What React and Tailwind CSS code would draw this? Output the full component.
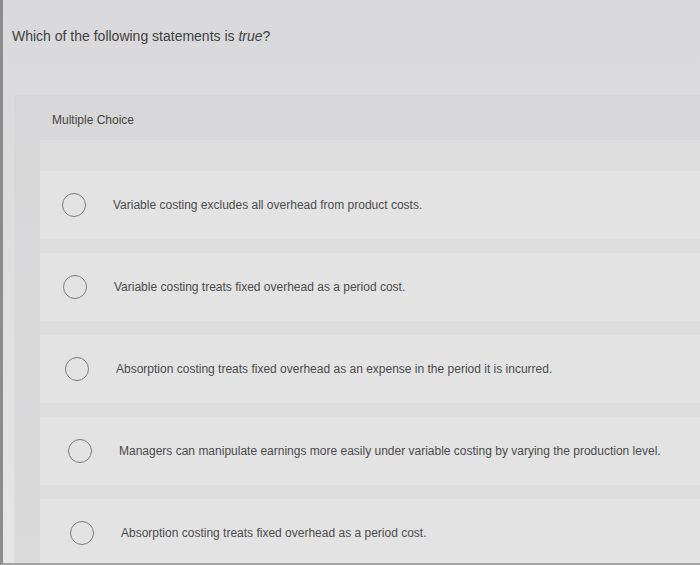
import React from 'react';

const options = [
  { text: 'Variable costing excludes all overhead from product costs.', indent: 'pl-[22px]' },
  { text: 'Variable costing treats fixed overhead as a period cost.', indent: 'pl-[23px]' },
  { text: 'Absorption costing treats fixed overhead as an expense in the period it is incurred.', indent: 'pl-[25px]' },
  { text: 'Managers can manipulate earnings more easily under variable costing by varying the production level.', indent: 'pl-[28px]' },
  { text: 'Absorption costing treats fixed overhead as a period cost.', indent: 'pl-[30px]' },
];

const OptionRow = ({ option }) => (
  <div className={`h-[68px] flex items-center bg-[#e3e3e4] ${option.indent}`}>
    <span className="w-6 h-6 shrink-0 rounded-full border-[1.5px] border-[#7c7c7c]" />
    <span className="ml-[27px] text-[12px] text-[#4b4b4b] whitespace-nowrap">{option.text}</span>
  </div>
);

export default function App() {
  return (
    <div
      className="w-[700px] h-[565px] overflow-hidden border-l-[3px] border-l-[#8c8c8c] border-b-2 border-b-[#a3a3a3] bg-linear-to-b from-[#d9d8da] to-[#e6e6e6]"
      style={{ fontFamily: '"Liberation Sans", Arial, sans-serif' }}
    >
      <div className="pt-[26px] pl-[9px] h-[46px] text-[14px] leading-[20px] text-[#3f3f3f]">
        Which of the following statements is <em>true</em>?
      </div>

      <div className="mt-[49px] ml-[11px] bg-[#d6d5d7]/70 h-full">
        <div className="h-[45px] pt-[17px] pl-[38px] text-[12px] leading-[16px] text-[#444]">
          Multiple Choice
        </div>

        <div className="ml-[26px] pt-[31px] bg-[#dfdfe0] h-full flex flex-col gap-[14px]">
          {options.map((option, i) => (
            <OptionRow key={i} option={option} />
          ))}
        </div>
      </div>
    </div>
  );
}
